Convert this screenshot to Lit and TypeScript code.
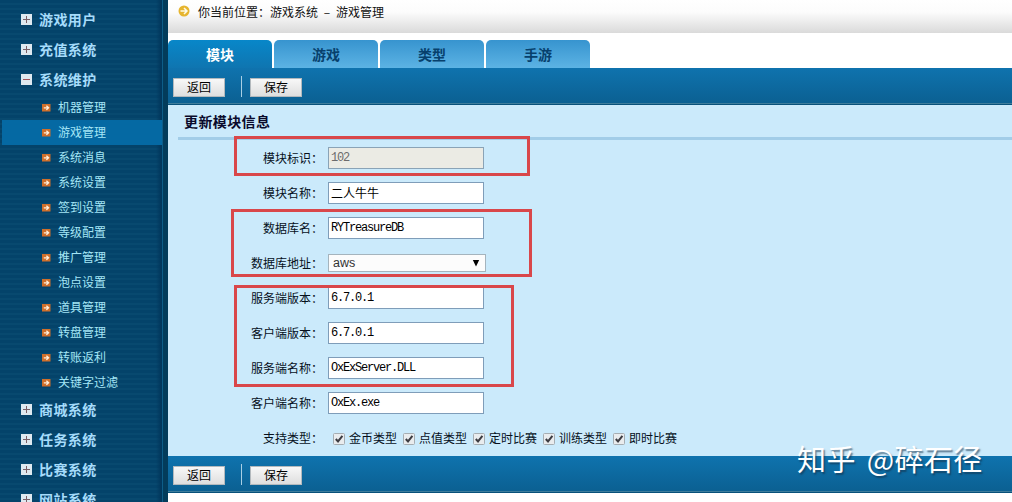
import { LitElement, html, css } from "lit";
import { customElement } from "lit/decorators.js";

interface Group { name: string; open?: boolean; items?: string[]; }

const MENU: Group[] = [
  { name: "游戏用户" },
  { name: "充值系统" },
  {
    name: "系统维护", open: true,
    items: ["机器管理", "游戏管理", "系统消息", "系统设置", "签到设置", "等级配置", "推广管理", "泡点设置", "道具管理", "转盘管理", "转账返利", "关键字过滤"],
  },
  { name: "商城系统" },
  { name: "任务系统" },
  { name: "比赛系统" },
  { name: "网站系统" },
];
const ACTIVE = "游戏管理";

@customElement("side-menu")
class SideMenu extends LitElement {
  static styles = css`
    :host {
      display: block; box-sizing: border-box; width: 168px; height: 100%; padding-top: 5px; overflow: hidden;
      background:
        linear-gradient(90deg, transparent 156px, #02375c 161px, #02375c 162px, #0d5d88 162px, #0d5d88 163px, #033c5b 163px),
        repeating-linear-gradient(180deg, #04436a 0 3px, #08496f 3px 5px);
    }
    .group { display: flex; align-items: center; height: 30px; padding-left: 21px; font-size: 14px; font-weight: 700; letter-spacing: .4px; color: #a6dcfb; }
    .group svg { margin-right: 6px; }
    .item { display: flex; align-items: center; height: 25px; width: 160px; margin-left: 2px; padding-left: 40px; box-sizing: border-box; font-size: 12px; color: #a4e6f6; }
    .item svg { margin-right: 7px; }
    .group span, .item span { padding-bottom: 2px; }
    .active { background: #0569a3; }
    svg { display: block; flex: none; }
  `;
  render() {
    return MENU.map((g) => html`
      <div class="group">
        <svg width="12" height="12" viewBox="0 0 12 12">
          <rect width="11" height="11" fill="#dfe9f0"/>
          <path d=${g.open ? "M2 5.5H9" : "M2 5.5H9M5.5 2V9"} stroke=${g.open ? "#a4545a" : "#7a5f66"} stroke-width="1"/>
        </svg><span>${g.name}</span>
      </div>
      ${(g.items ?? []).map((i) => html`
        <div class="item ${i === ACTIVE ? "active" : ""}">
          <svg width="9" height="8" viewBox="0 0 9 8">
            <rect width="8.5" height="7.5" fill="#cf6f2b"/>
            <path d="M1.8 3.8H6.5M4.4 1.7L6.6 3.8L4.4 5.9" fill="none" stroke="#fff0dc" stroke-width="1.3"/>
          </svg><span>${i}</span>
        </div>`)}
    `);
  }
}

@customElement("tool-bar")
class ToolBar extends LitElement {
  static styles = css`
    :host {
      display: flex; box-sizing: border-box; height: 37px; padding: 8px 0 0 5px; align-items: flex-start;
      background: linear-gradient(180deg, #0f73ae, #0b6092 35px, #3f7d9b 35px, #3f7d9b 36px, #08517a 36px);
    }
    .btn {
      font: inherit; font-size: 12px; line-height: 16px; width: 52px; height: 19px; margin: 2px 0 0; padding: 0 0 1px; box-sizing: border-box;
      border: 1px solid #b3b9bd; border-radius: 0; background: linear-gradient(#f8f8f8, #dedede); color: #000;
    }
    .sep { width: 1px; height: 21px; margin: 0 8px 0 16px; background: #a9cfe4; }
  `;
  render() {
    return html`<button class="btn">返回</button><span class="sep"></span><button class="btn">保存</button>`;
  }
}

interface Field { label: string; value: string; kind?: "disabled" | "select"; cjk?: boolean; }

const FIELDS: Field[] = [
  { label: "模块标识", value: "102", kind: "disabled" },
  { label: "模块名称", value: "二人牛牛", cjk: true },
  { label: "数据库名", value: "RYTreasureDB" },
  { label: "数据库地址", value: "aws", kind: "select" },
  { label: "服务端版本", value: "6.7.0.1" },
  { label: "客户端版本", value: "6.7.0.1" },
  { label: "服务端名称", value: "OxExServer.DLL" },
  { label: "客户端名称", value: "OxEx.exe" },
];
const TYPES = ["金币类型", "点值类型", "定时比赛", "训练类型", "即时比赛"];

@customElement("module-form")
class ModuleForm extends LitElement {
  static styles = css`
    :host { display: block; background: #cbeafb; color: #06101c; font-size: 12px; }
    .title { height: 36px; padding-left: 10px; box-sizing: border-box; }
    .title h2 { margin: 0; height: 35px; box-sizing: border-box; border-bottom: 3px solid #a2cde8; padding-left: 6px; font-size: 14px; line-height: 33px; letter-spacing: .4px; color: #0a0a2c; }
    .row { display: flex; height: 35px; align-items: flex-start; }
    .label { width: 155px; line-height: 34px; text-align: right; margin-right: 5px; flex: none; }
    .box { width: 156px; height: 22px; margin-top: 6px; padding: 0 2px; box-sizing: border-box; border: 1px solid #7f9db9; background: #fff; font-family: "Liberation Mono", monospace; font-size: 12px; letter-spacing: -1.2px; line-height: 21px; color: #000; }
    .cjk { font-family: inherit; font-size: 12px; letter-spacing: 0; line-height: 19px; }
    .disabled { background: #ebebe4; color: #6c6c6c; border-color: #8aa3b6; }
    .select { display: flex; align-items: center; justify-content: space-between; width: 158px; height: 18px; margin-top: 8px; padding: 0 5px 0 4px; box-sizing: border-box; border: 1px solid #a5b4bd; background: #fcfcfc; font: 12.5px/16px "Liberation Sans", sans-serif; color: #333; }
    .checks { display: flex; padding-left: 5px; }
    .check { display: flex; width: 70px; height: 35px; align-items: center; white-space: nowrap; }
    .check svg { margin-right: 4px; flex: none; }
    .check span { padding-bottom: 3px; }
  `;
  field(f: Field) {
    if (f.kind === "select") {
      return html`<div class="select"><span>${f.value}</span>
        <svg width="8" height="8" viewBox="0 0 8 8"><path d="M.8 1H7.2L4 7.4Z" fill="#000"/></svg></div>`;
    }
    return html`<div class="box ${f.cjk ? "cjk" : ""} ${f.kind ?? ""}">${f.value}</div>`;
  }
  render() {
    return html`
      <div class="title"><h2>更新模块信息</h2></div>
      ${FIELDS.map((f) => html`<div class="row"><span class="label">${f.label}：</span>${this.field(f)}</div>`)}
      <div class="row"><span class="label">支持类型：</span>
        <div class="checks">
          ${TYPES.map((t) => html`<label class="check">
            <svg width="12" height="12" viewBox="0 0 12 12">
              <rect x=".5" y=".5" width="11" height="11" rx="1" fill="#e9ecee" stroke="#a5adb2"/>
              <path d="M2.8 6L5 8.4L9.4 2.8" fill="none" stroke="#3c3c42" stroke-width="2"/>
            </svg><span>${t}</span></label>`)}
        </div>
      </div>`;
  }
}

@customElement("app-root")
class AppRoot extends LitElement {
  static styles = css`
    :host { display: grid; grid-template-columns: 168px 1fr; width: 1012px; height: 502px; position: relative; overflow: hidden; background: #fff; font-family: "Noto Sans CJK SC", sans-serif; }
    side-menu { min-height: 0; height: 502px; }
    .crumb { display: flex; height: 33px; box-sizing: border-box; padding: 0 0 11px 10px; align-items: center; font-size: 12px; color: #111; background: linear-gradient(180deg, #fff 0, #fcfcfc 12px, #dadada 33px); }
    .crumb svg { margin-right: 8px; }
    .dash { display: inline-block; width: 18px; text-align: center; }
    .tabs { display: flex; gap: 2px; padding-top: 7px; }
    .tab { width: 104px; height: 28px; border-radius: 5px 5px 0 0; text-align: center; font-size: 14px; line-height: 28px; font-weight: 700; color: #07406c; background: linear-gradient(#3794cf, #5cb3e4); }
    .on { color: #fff; background: linear-gradient(#0887c9, #0f75b0); }
    .mark { position: absolute; box-sizing: border-box; border: 3px solid #d9474a; }
    .m1 { left: 234px; top: 136px; width: 296px; height: 40px; }
    .m2 { left: 231px; top: 209px; width: 301px; height: 68px; }
    .m3 { left: 234px; top: 285px; width: 280px; height: 102px; }
    .stamp { position: absolute; left: 797px; top: 437px; font-size: 29px; letter-spacing: .4px; word-spacing: 4px; line-height: 42px; white-space: nowrap; color: #fff; text-shadow: 1.5px 1.5px 1.5px rgba(20, 50, 75, .6); }
  `;
  render() {
    return html`
      <side-menu></side-menu>
      <main>
        <div class="crumb">
          <svg width="12" height="12" viewBox="0 0 12 12"><circle cx="6" cy="6" r="5.5" fill="#e6b52f"/><path d="M2.5 6H9M6 3L9 6L6 9" fill="none" stroke="#fffbe8" stroke-width="1.5"/></svg>
          <span>你当前位置：游戏系统<span class="dash">–</span>游戏管理</span>
        </div>
        <div class="tabs">
          ${["模块", "游戏", "类型", "手游"].map((t, i) => html`<div class="tab ${i === 0 ? "on" : ""}">${t}</div>`)}
        </div>
        <tool-bar></tool-bar>
        <module-form></module-form>
        <tool-bar></tool-bar>
      </main>
      <div class="mark m1"></div><div class="mark m2"></div><div class="mark m3"></div>
      <div class="stamp">知乎 @碎石径</div>`;
  }
}
